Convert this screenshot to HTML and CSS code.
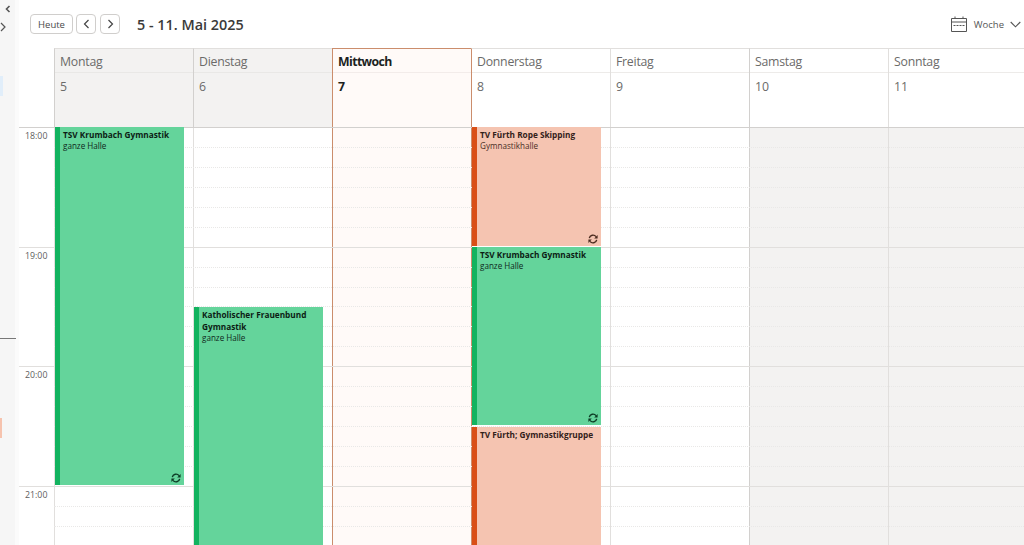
FILE: index.html
```html
<!DOCTYPE html>
<html lang="de">
<head>
<meta charset="utf-8">
<title>Kalender</title>
<link rel="stylesheet" href="styles.css">
</head>
<body>
<div class="app">
  <aside class="rail">
    <svg class="rail-a" width="6" height="8" viewBox="0 0 6 8"><path d="M4.5 1 1.5 4l3 3" fill="none" stroke="#555" stroke-width="1.6"/></svg>
    <svg class="rail-b" width="6" height="10" viewBox="0 0 6 10"><path d="M1 1l4 4-4 4" fill="none" stroke="#555" stroke-width="1.2"/></svg>
    <div class="rail-blue"></div>
    <div class="rail-line"></div>
    <div class="rail-orange"></div>
  </aside>
  <main class="cal">
    <header class="toolbar">
      <button class="btn btn-today">Heute</button>
      <button class="btn btn-nav"><svg width="7" height="10" viewBox="0 0 7 10"><path d="M5.5 1 1.5 5l4 4" fill="none" stroke="#444" stroke-width="1.2"/></svg></button>
      <button class="btn btn-nav"><svg width="7" height="10" viewBox="0 0 7 10"><path d="M1.5 1l4 4-4 4" fill="none" stroke="#444" stroke-width="1.2"/></svg></button>
      <h1 class="range">5 - 11. Mai 2025</h1>
      <div class="view">
        <svg width="16" height="16" viewBox="0 0 16 16"><path d="M.5 2.5h15v13H.5zM.5 6h15M4 .5v2M12 .5v2" fill="none" stroke="#555" stroke-width="1"/><path d="M2.5 9.5h11" stroke="#555" stroke-width="1" stroke-dasharray="2 1"/></svg>
        <span class="view-label">Woche</span>
        <svg width="11" height="7" viewBox="0 0 11 7"><path d="M.7 1l4.8 4.8L10.3 1" fill="none" stroke="#555" stroke-width="1.1"/></svg>
      </div>
    </header>
    <section class="head">
      <div class="head-gutter"></div>
      <div class="hd past"><div class="hd-name">Montag</div><div class="hd-num">5</div></div>
      <div class="hd past"><div class="hd-name">Dienstag</div><div class="hd-num">6</div></div>
      <div class="hd today"><div class="hd-name">Mittwoch</div><div class="hd-num">7</div></div>
      <div class="hd after"><div class="hd-name">Donnerstag</div><div class="hd-num">8</div></div>
      <div class="hd"><div class="hd-name">Freitag</div><div class="hd-num">9</div></div>
      <div class="hd strong"><div class="hd-name">Samstag</div><div class="hd-num">10</div></div>
      <div class="hd"><div class="hd-name">Sonntag</div><div class="hd-num">11</div></div>
    </section>
    <section class="body">
      <div class="days">
        <div class="time-col"></div>
        <div class="day">
          <article class="ev green s1-18"><b>TSV Krumbach Gymnastik</b><span>ganze Halle</span>
            <svg class="rec" width="10" height="10" viewBox="0 0 10 10"><path d="M1.3 4.2A3.8 3.8 0 0 1 8 2.6M8.7 5.8A3.8 3.8 0 0 1 2 7.4" fill="none" stroke="#0c3b24" stroke-width="1.4"/><path d="M9.6 1v3.4H6.2zM.4 9V5.6h3.4z" fill="#0c3b24"/></svg></article>
        </div>
        <div class="day">
          <article class="ev green s10-end"><b>Katholischer Frauenbund Gymnastik</b><span>ganze Halle</span></article>
        </div>
        <div class="day today"></div>
        <div class="day after">
          <article class="ev orange s1-6"><b>TV Fürth Rope Skipping</b><span>Gymnastikhalle</span>
            <svg class="rec" width="10" height="10" viewBox="0 0 10 10"><path d="M1.3 4.2A3.8 3.8 0 0 1 8 2.6M8.7 5.8A3.8 3.8 0 0 1 2 7.4" fill="none" stroke="#4a2a1e" stroke-width="1.4"/><path d="M9.6 1v3.4H6.2zM.4 9V5.6h3.4z" fill="#4a2a1e"/></svg></article>
          <article class="ev green s7-9"><b>TSV Krumbach Gymnastik</b><span>ganze Halle</span>
            <svg class="rec" width="10" height="10" viewBox="0 0 10 10"><path d="M1.3 4.2A3.8 3.8 0 0 1 8 2.6M8.7 5.8A3.8 3.8 0 0 1 2 7.4" fill="none" stroke="#0c3b24" stroke-width="1.4"/><path d="M9.6 1v3.4H6.2zM.4 9V5.6h3.4z" fill="#0c3b24"/></svg></article>
          <article class="ev orange s16-end"><b>TV Fürth; Gymnastikgruppe</b></article>
        </div>
        <div class="day"></div>
        <div class="day weekend strong"></div>
        <div class="day weekend"></div>
      </div>
      <div class="lines">
        <div class="slot hour"><span class="time">18:00</span></div>
        <div class="slot"></div><div class="slot"></div><div class="slot"></div><div class="slot"></div><div class="slot"></div>
        <div class="slot hour"><span class="time">19:00</span></div>
        <div class="slot"></div><div class="slot"></div><div class="slot"></div><div class="slot"></div><div class="slot"></div>
        <div class="slot hour"><span class="time">20:00</span></div>
        <div class="slot"></div><div class="slot"></div><div class="slot"></div><div class="slot"></div><div class="slot"></div>
        <div class="slot hour"><span class="time">21:00</span></div>
        <div class="slot"></div><div class="slot"></div><div class="slot"></div>
      </div>
    </section>
  </main>
</div>
</body>
</html>
```
FILE: styles.css
```css
* { box-sizing: border-box; }
html, body { margin: 0; height: 545px; overflow: hidden; background: #fff; }
body { font-family: "Open Sans", "Noto Sans", sans-serif; color: #323130; }

.app { display: flex; height: 545px; }

.rail { position: relative; width: 19px; flex: none; background: #f6f6f6; border-right: 4px solid #fbfbfb; }
.rail-a { position: absolute; left: 5px; top: 5px; }
.rail-b { position: absolute; left: 0; top: 22px; }
.rail-blue { position: absolute; left: 0; top: 76px; width: 3px; height: 20px; background: #e1eefa; }
.rail-line { position: absolute; left: 0; top: 338px; width: 16px; height: 1px; background: #777; }
.rail-orange { position: absolute; left: 0; top: 418px; width: 2px; height: 20px; background: #f6c3ae; }

.cal { flex: 1; min-width: 0; display: flex; flex-direction: column; overflow: hidden; }

.toolbar { height: 48px; flex: none; display: flex; align-items: center; padding: 0 3px 0 11px; }
.btn { height: 20px; background: #fff; border: 1px solid #d0cecc; border-radius: 4px; color: #4a4a4a; font: 9.5px "Open Sans", sans-serif; padding: 0; display: flex; align-items: center; justify-content: center; }
.btn-today { width: 43px; margin-right: 3px; }
.btn-nav { width: 20px; margin-right: 4px; }
.range { margin: 0 0 0 13px; font-size: 14.4px; font-weight: 600; color: #3b3a39; }
.view { margin-left: auto; display: flex; align-items: center; color: #555; }
.view-label { font-size: 9.5px; margin: 0 6px 0 7px; }

.head { flex: none; height: 79px; display: grid; grid-template-columns: 35px repeat(7, 139px); }
.hd { border-left: 1px solid #e1dfdd; border-top: 1px solid #e1dfdd; color: #6b6a69; }
.hd-name { height: 24px; padding: 4px 0 0 5px; font-size: 12.3px; letter-spacing: -.25px; line-height: 17px; border-bottom: 1px solid #edebe9; }
.hd-num { padding: 5px 0 0 5px; font-size: 12.3px; line-height: 17px; }
.hd.past { background: #f3f2f1; border-left-color: #d2d0ce; }
.hd.past .hd-name { border-bottom-color: #e9e8e6; }
.hd.today { background: #fffaf8; border: 1px solid #cb8d6c; border-bottom: 0; border-right: 0; color: #201f1e; font-weight: 700; }
.hd.today .hd-name { letter-spacing: -.6px; border-bottom-color: #f3ecea; }
.hd.after { border-left-color: #cb8d6c; }
.hd.strong { border-left-color: #d2d0ce; }

.body { position: relative; flex: 1; min-height: 0; overflow: hidden; }
.days { display: grid; grid-template-columns: 35px repeat(7, 139px); height: 100%; }
.day { display: grid; grid-template-rows: repeat(22, 19.94px); border-left: 1px solid #e1dfdd; padding-right: 9px; }
.day.today { background: #fffaf8; border-left-color: #cb8d6c; }
.day.after { border-left-color: #cb8d6c; }
.day.weekend { background: #f3f2f1; }
.day.strong { border-left-color: #d2d0ce; }

.lines { position: absolute; inset: 0; z-index: 1; pointer-events: none; }
.slot { height: 19.94px; margin-left: 35px; border-top: 1px dotted #e9e8e7; }
.slot.hour { margin-left: 0; border-top: 1px solid #e1dfdd; position: relative; }
.slot.hour:first-child { border-top-color: #d2d0ce; }
.time { position: absolute; left: 6px; top: 2px; font-size: 8.8px; line-height: 12px; color: #605e5c; }

.ev { position: relative; z-index: 2; padding: 2px 0 0 3px; border-left: 5px solid; font-size: 8.1px; line-height: 11.3px; color: #10281b; margin-bottom: 1px; }
.ev b, .ev span { display: block; }
.ev b { font-weight: 700; font-size: 8.25px; color: #0c1c14; }
.green { background: #64d49b; border-left-color: #12b35f; }
.orange { background: #f5c4b1; border-left-color: #d94f17; color: #4a2f25; }
.orange b { color: #33211a; }
.rec { position: absolute; right: 3px; bottom: 2px; }
.s1-18 { grid-row: 1 / span 18; }
.s1-6 { grid-row: 1 / span 6; }
.s7-9 { grid-row: 7 / span 9; }
.s10-end { grid-row: 10 / -1; margin: 1px 0 0; }
.s16-end { grid-row: 16 / -1; margin: 1px 0 0; }
```
